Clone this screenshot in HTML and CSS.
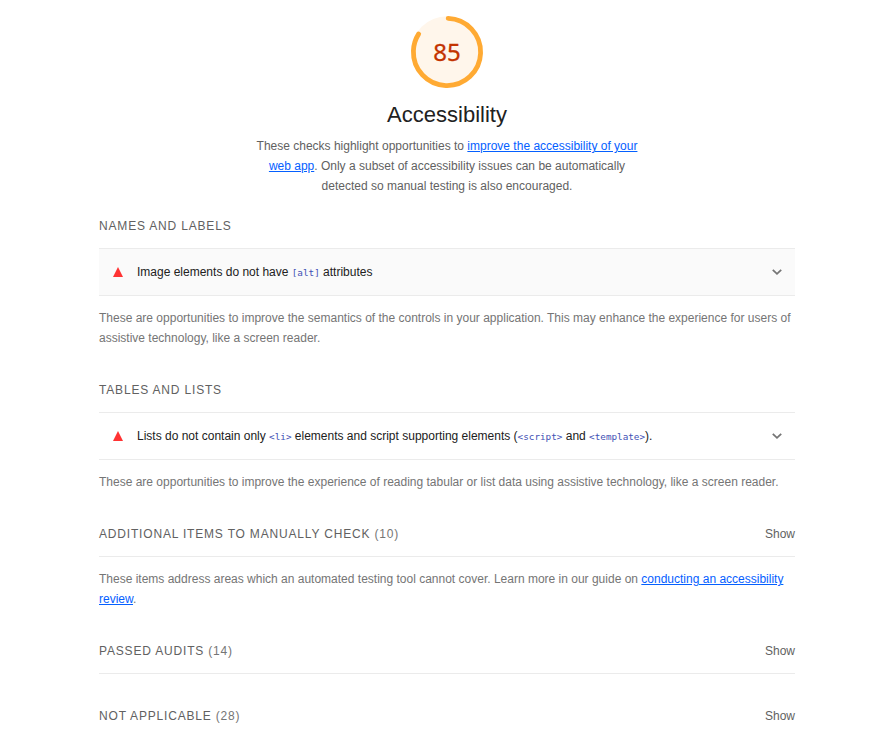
FILE: index.html
```html
<!DOCTYPE html>
<html lang="en">
<head>
<meta charset="utf-8">
<title>Accessibility</title>
<link rel="stylesheet" href="styles.css">
</head>
<body>
<main class="category">
  <header class="header">
    <div class="gauge">
      <svg class="gauge-ring" viewBox="0 0 72 72"><circle class="gauge-base" cx="36" cy="36" r="35.8"/><circle class="gauge-arc" cx="36" cy="36" r="33.6" pathLength="100" stroke-dasharray="83.5 100" transform="rotate(-88 36 36)"/></svg>
      <span class="score">85</span>
    </div>
    <h1 class="title">Accessibility</h1>
    <p class="intro">These checks highlight opportunities to <a href="#">improve the accessibility of your web app</a>. Only a subset of accessibility issues can be automatically detected so manual testing is also encouraged.</p>
  </header>

  <section class="group first">
    <h2 class="group-title">Names and labels</h2>
    <div class="audit shaded">
      <span class="fail"></span>
      <span class="audit-text">Image elements do not have <code>[alt]</code> attributes</span>
      <svg class="chevron" viewBox="0 0 12 8"><path d="M1.8 1.8 6 5.8 10.2 1.8"/></svg>
    </div>
    <p class="note">These are opportunities to improve the semantics of the controls in your application. This may enhance the experience for users of assistive technology, like a screen reader.</p>
  </section>

  <section class="group">
    <h2 class="group-title">Tables and lists</h2>
    <div class="audit">
      <span class="fail"></span>
      <span class="audit-text">Lists do not contain only <code>&lt;li&gt;</code> elements and script supporting elements (<code>&lt;script&gt;</code> and <code>&lt;template&gt;</code>).</span>
      <svg class="chevron" viewBox="0 0 12 8"><path d="M1.8 1.8 6 5.8 10.2 1.8"/></svg>
    </div>
    <p class="note">These are opportunities to improve the experience of reading tabular or list data using assistive technology, like a screen reader.</p>
  </section>

  <section class="clump">
    <div class="clump-head"><h2 class="group-title">Additional items to manually check <span class="count">(10)</span></h2><span class="show">Show</span></div>
    <p class="note">These items address areas which an automated testing tool cannot cover. Learn more in our guide on <a href="#">conducting an accessibility review</a>.</p>
  </section>
  <section class="clump">
    <div class="clump-head"><h2 class="group-title">Passed audits <span class="count">(14)</span></h2><span class="show">Show</span></div>
  </section>
  <section class="clump">
    <div class="clump-head"><h2 class="group-title">Not applicable <span class="count">(28)</span></h2><span class="show">Show</span></div>
  </section>
</main>
</body>
</html>
```
FILE: styles.css
```css
* { box-sizing: border-box; }
body { margin: 0; background: #fff; color: #212121; font: 12px/20px "Liberation Sans", Arial, sans-serif; overflow: hidden; }
h1, h2, p { margin: 0; font-weight: 400; }
a { color: #0560ff; }
.category { width: 696px; margin: 0 auto; padding-top: 16px; }
.header { display: flex; flex-direction: column; align-items: center; }
.gauge { display: grid; place-items: center; width: 72px; height: 72px; }
.gauge > * { grid-area: 1 / 1; }
.gauge-ring { width: 72px; height: 72px; overflow: visible; }
.gauge-base { fill: #fff6eb; }
.gauge-arc { fill: none; stroke: #fa3; stroke-width: 4.8; stroke-linecap: round; }
.score { color: #c33300; font: 24px/32px "Noto Sans", sans-serif; -webkit-text-stroke: 0.3px #c33300; }
.title { margin-top: 11px; font-size: 22px; line-height: 32px; }
.intro { width: 400px; margin-top: 5px; text-align: center; color: #616161; }
.group { margin-top: 32px; }
.group.first { margin-top: 20px; }
.group-title { color: #616161; font-size: 12px; line-height: 20px; letter-spacing: 0.82px; text-transform: uppercase; }
.audit { display: flex; align-items: center; height: 48px; margin-top: 12px; padding: 0 12px 0 14px; border: solid #ebebeb; border-width: 1px 0; }
.shaded { background: #fafafa; }
.fail { border: 5px solid transparent; border-bottom: 10px solid #f33; border-top: 0; margin-right: 14px; }
.audit-text { flex: 1; }
code { color: #3f51b5; font: 9.3px "DejaVu Sans Mono", monospace; }
.chevron { width: 12px; height: 8px; fill: none; stroke: #757575; stroke-width: 1.8; }
.note { margin-top: 12px; color: #757575; }
.clump { margin-top: 32px; }
.clump-head { display: flex; justify-content: space-between; padding-bottom: 12px; border-bottom: 1px solid #ebebeb; }
.count { color: #757575; }
.show { color: #616161; }
```
